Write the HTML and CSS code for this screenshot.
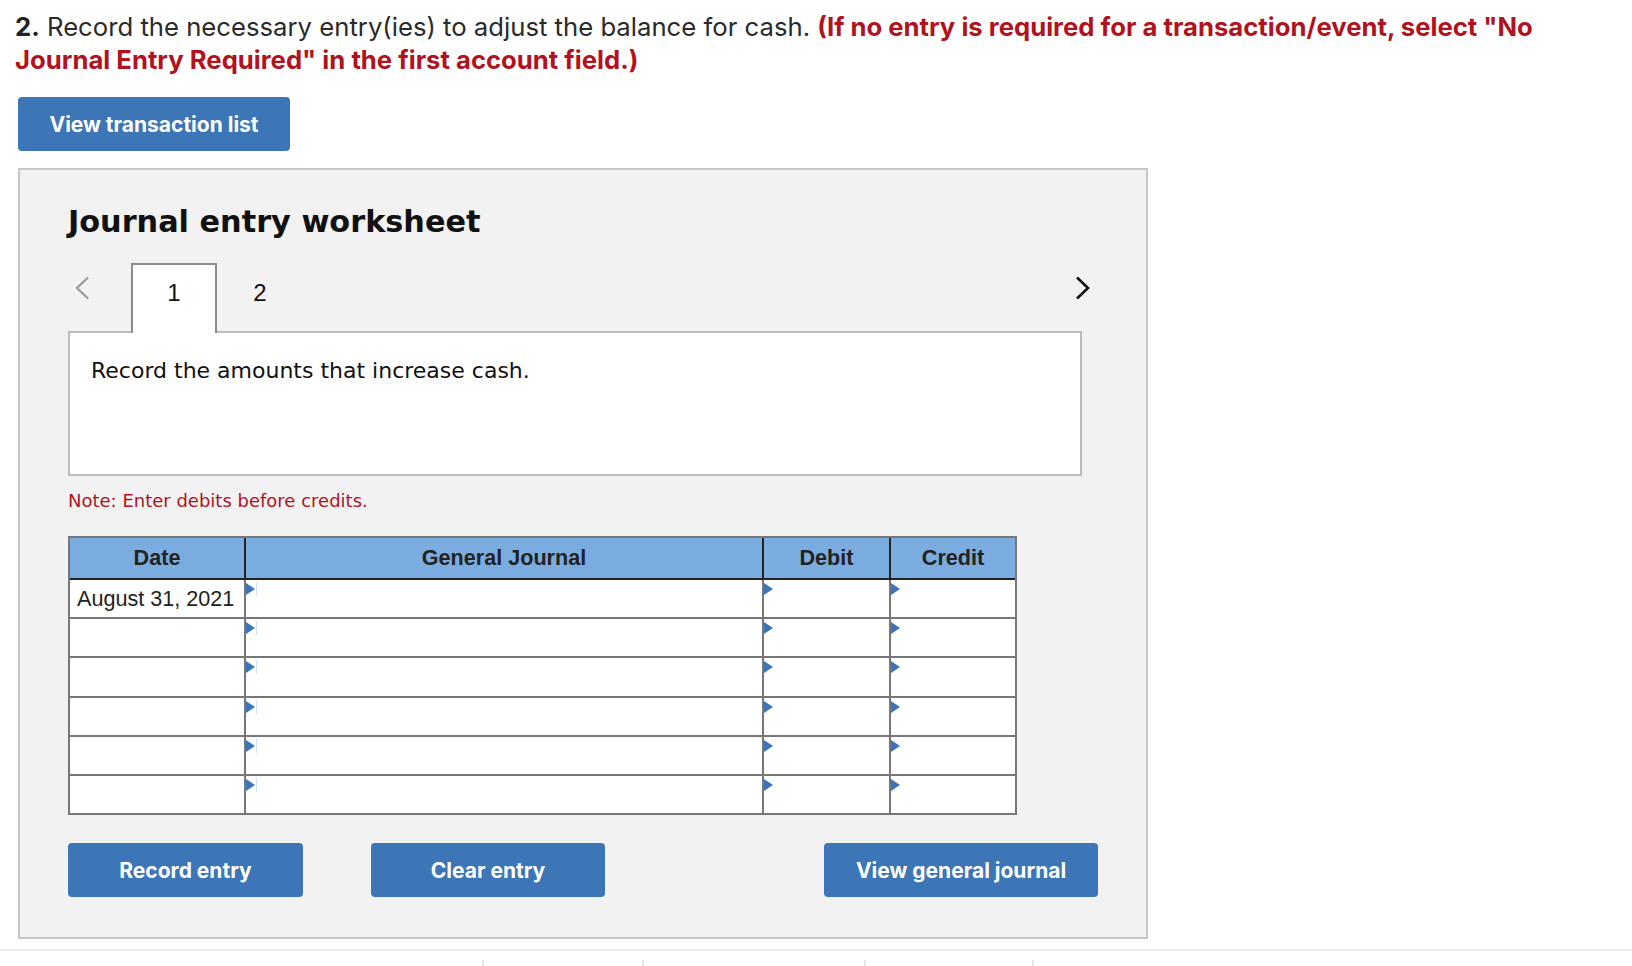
FILE: index.html
```html
<!DOCTYPE html>
<html lang="en">
<head>
<meta charset="utf-8">
<title>Journal entry worksheet</title>
<link rel="stylesheet" href="styles.css">
</head>
<body>
<main class="page">
  <p class="prompt"><strong class="qnum">2.</strong><span class="ask"> Record the necessary entry(ies) to adjust the balance for cash. </span><strong class="warn">(If no entry is required for a transaction/event, select "No</strong> <strong class="warn">Journal Entry Required" in the first account field.)</strong></p>
  <button class="btn btn-top" type="button">View transaction list</button>
  <section class="panel">
    <h2 class="panel-title">Journal entry worksheet</h2>
    <div class="tabs">
      <span class="chev chev-prev"><svg viewBox="0 0 16 24"><polyline points="14,1.5 3,12 14,22.5" fill="none" stroke="#9a9a9a" stroke-width="2.2"/></svg></span>
      <span class="tab tab-active">1</span>
      <span class="tab">2</span>
      <span class="chev chev-next"><svg viewBox="0 0 16 24"><polyline points="2,1.5 13,12 2,22.5" fill="none" stroke="#111" stroke-width="2.6"/></svg></span>
    </div>
    <div class="instr">Record the amounts that increase cash.</div>
    <p class="note">Note: Enter debits before credits.</p>
    <div class="jtable">
      <div class="jhead">
        <div class="jcell">Date</div>
        <div class="jcell">General Journal</div>
        <div class="jcell">Debit</div>
        <div class="jcell">Credit</div>
      </div>
      <div class="jbody">
        <div class="jcell">August 31, 2021</div><div class="jcell field acct"></div><div class="jcell field"></div><div class="jcell field"></div>
        <div class="jcell"></div><div class="jcell field acct"></div><div class="jcell field"></div><div class="jcell field"></div>
        <div class="jcell"></div><div class="jcell field acct"></div><div class="jcell field"></div><div class="jcell field"></div>
        <div class="jcell"></div><div class="jcell field acct"></div><div class="jcell field"></div><div class="jcell field"></div>
        <div class="jcell"></div><div class="jcell field acct"></div><div class="jcell field"></div><div class="jcell field"></div>
        <div class="jcell"></div><div class="jcell field acct"></div><div class="jcell field"></div><div class="jcell field"></div>
      </div>
    </div>
    <div class="actions">
      <button class="btn btn-record" type="button">Record entry</button>
      <button class="btn btn-clear" type="button">Clear entry</button>
      <button class="btn btn-journal" type="button">View general journal</button>
    </div>
  </section>
  <div class="footer"><span></span><span></span><span></span><span></span><span></span></div>
</main>
</body>
</html>
```

FILE: styles.css
```css
* { box-sizing: border-box; }
html, body { margin: 0; padding: 0; background: #fff; }
body { font-family: "Inter", "Liberation Sans", sans-serif; color: #222; }

.page { padding: 0 18px; }

.prompt {
  margin: 0 0 0 -3px;
  padding-top: 10px;
  font-size: 25.7px;
  line-height: 33px;
  max-width: 1560px;
  color: #2a2a2a;
}
.qnum { font-weight: 700; color: #222; }
.warn { font-weight: 700; color: #b0131d; }

.btn {
  display: inline-flex;
  align-items: center;
  justify-content: center;
  height: 54px;
  padding: 0;
  border: 0;
  border-radius: 4px;
  background: #3c76b6;
  color: #fff;
  font-family: "Inter", "Liberation Sans", sans-serif;
  font-weight: 700;
  font-size: 21px;
}
.btn-top { display: flex; width: 272px; margin-top: 21px; }

.panel {
  width: 1130px;
  margin-top: 17px;
  background: #f2f2f2;
  border: 2px solid #c7c7c7;
  padding: 34px 48px 40px;
}
.panel-title {
  margin: 0 0 24px;
  font-family: "DejaVu Sans", Verdana, sans-serif;
  font-weight: 700;
  font-size: 30.3px;
  line-height: 35px;
  color: #111;
}

.tabs {
  display: flex;
  align-items: flex-start;
  margin-bottom: -2px;
  position: relative;
  z-index: 1;
}
.chev { display: block; margin-top: 13px; }
.chev svg { display: block; width: 16px; height: 24px; }
.chev-prev { width: 63px; padding-left: 6px; }
.chev-next { margin-left: auto; margin-right: 7px; }
.tab {
  width: 86px;
  height: 70px;
  padding-top: 14px;
  text-align: center;
  font-family: "Liberation Sans", Arial, sans-serif;
  font-size: 24px;
  line-height: 28px;
  color: #111;
  border: 2px solid transparent;
  border-bottom: 0;
}
.tab-active { background: #fff; border-color: #8c8c8c; }

.instr {
  width: 1014px;
  height: 145px;
  background: #fff;
  border: 2px solid #bcbcbc;
  padding: 25px 21px;
  font-family: "DejaVu Sans", Verdana, sans-serif;
  font-size: 22px;
  line-height: 25px;
  color: #111;
}
.note {
  margin: 14px 0 25px;
  font-family: "DejaVu Sans", Verdana, sans-serif;
  font-size: 18px;
  line-height: 21px;
  color: #b0131d;
}

.jtable {
  width: 949px;
  border: 2px solid #777;
  font-family: "Liberation Sans", Arial, sans-serif;
  font-size: 21.6px;
  color: #222;
}
.jhead, .jbody {
  display: grid;
  grid-template-columns: 174px 516px 125px 124px;
  column-gap: 2px;
}
.jhead { background: #222; border-bottom: 2px solid #222; }
.jhead .jcell {
  height: 40px;
  background: #7aacdf;
  font-weight: 700;
  display: flex;
  align-items: center;
  justify-content: center;
}
.jbody { background: #777; row-gap: 2px; grid-auto-rows: 37.2px; }
.jbody .jcell {
  position: relative;
  background: #fff;
  display: flex;
  align-items: center;
  padding-left: 7px;
}
.jcell.field::before {
  content: "";
  position: absolute;
  left: 0;
  top: 3px;
  border-left: 9px solid #3a75bc;
  border-top: 6px solid transparent;
  border-bottom: 6px solid transparent;
}
.jcell.acct::after {
  content: "";
  position: absolute;
  left: 10px;
  top: 2px;
  width: 1px;
  height: 14px;
  background: #cfe0f5;
}

.actions { display: flex; margin-top: 28px; }
.btn-record { width: 235px; }
.btn-clear { width: 234px; margin-left: 68px; }
.btn-journal { width: 274px; margin-left: auto; }

.footer {
  margin: 10px -18px 0;
  border-top: 2px solid #efefef;
  padding-top: 9px;
  display: grid;
  grid-template-columns: 482px 160px 222px 168px 1fr;
}
.footer span { height: 8px; }
.footer span + span { border-left: 2px solid #e6e6e6; }
```
